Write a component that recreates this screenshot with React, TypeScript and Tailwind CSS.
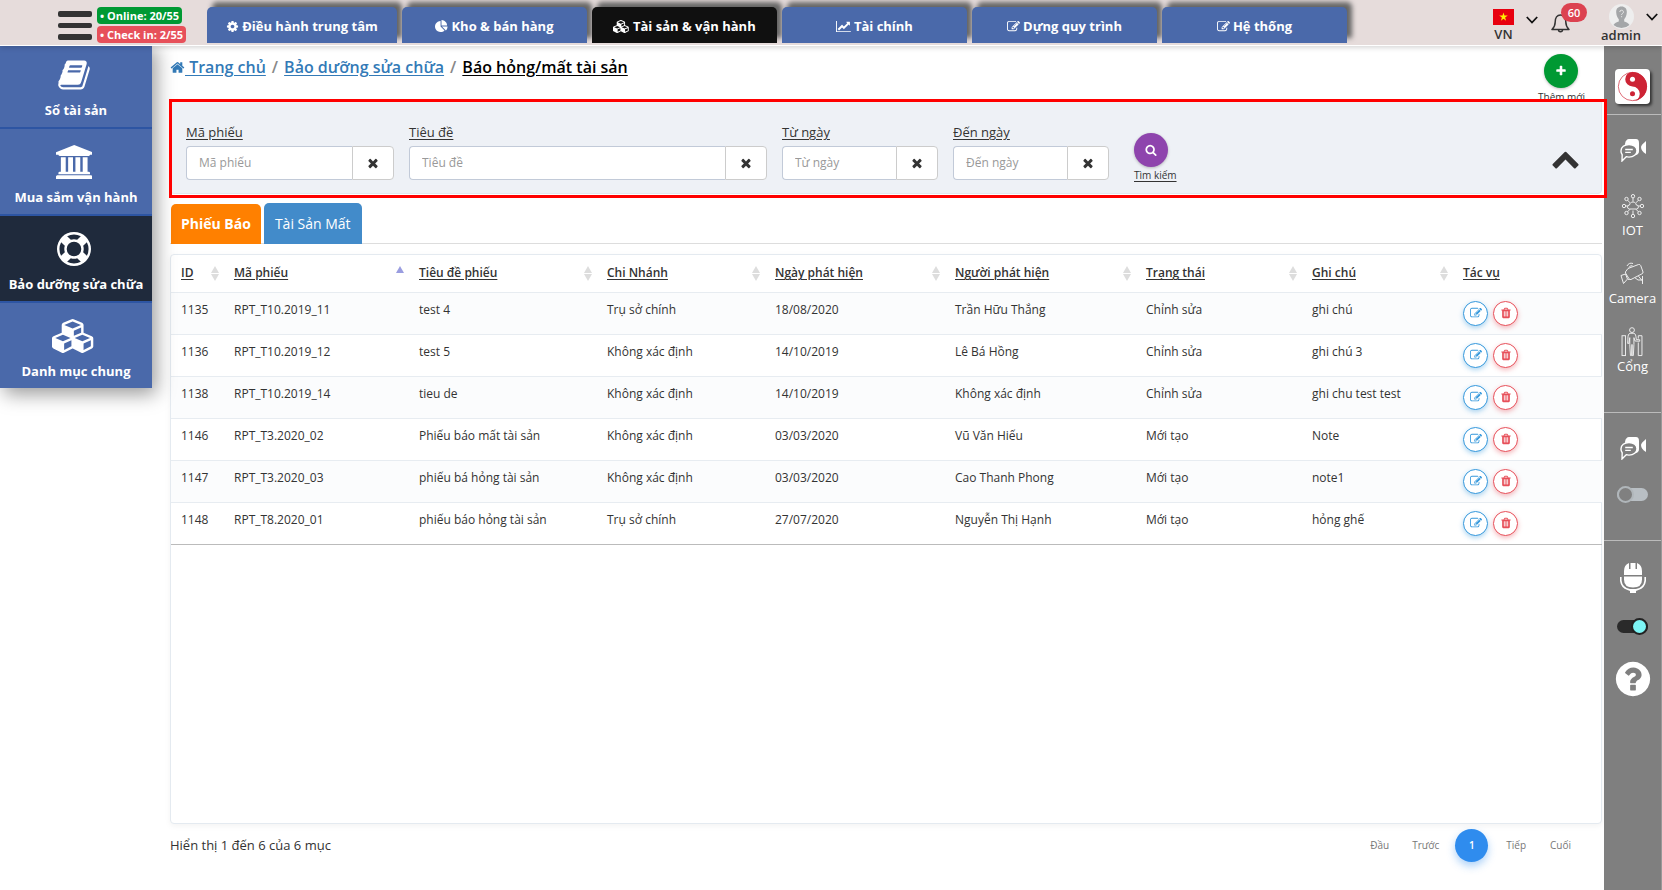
import { useState } from "react";
import type { ReactNode } from "react";

type IconShape = { w: number; d: string };

const icons: Record<string, IconShape> = {
  times: { w: 1792, d: "M1490 1322q0 40-28 68l-136 136q-28 28-68 28t-68-28l-294-294-294 294q-28 28-68 28t-68-28l-136-136q-28-28-28-68t28-68l294-294-294-294q-28-28-28-68t28-68l136-136q28-28 68-28t68 28l294 294 294-294q28-28 68-28t68 28l136 136q28 28 28 68t-28 68l-294 294 294 294q28 28 28 68z" },
  up: { w: 1792, d: "M1683 1331l-166 165q-19 19-45 19t-45-19l-531-531-531 531q-19 19-45 19t-45-19l-166-165q-19-19-19-45.5t19-45.5l742-741q19-19 45-19t45 19l742 741q19 19 19 45.5t-19 45.5z" },
  search: { w: 1792, d: "M1216 832q0-185-131.5-316.5t-316.5-131.5-316.5 131.5-131.5 316.5 131.5 316.5 316.5 131.5 316.5-131.5 131.5-316.5zm512 832q0 52-38 90t-90 38q-54 0-90-38l-343-342q-179 124-399 124-143 0-273.5-55.5t-225-150-150-225-55.5-273.5 55.5-273.5 150-225 225-150 273.5-55.5 273.5 55.5 225 150 150 225 55.5 273.5q0 220-124 399l343 343q37 37 37 90z" },
  edit: { w: 1792, d: "M888 1184l116-116-152-152-116 116v56h96v96h56zm440-720q-16-16-33 1l-350 350q-17 17-1 33t33-1l350-350q17-17 1-33zm80 594v190q0 119-84.5 203.5t-203.5 84.5h-832q-119 0-203.5-84.5t-84.5-203.5v-832q0-119 84.5-203.5t203.5-84.5h832q63 0 117 25 15 7 18 23 3 17-9 29l-49 49q-14 14-32 8-23-6-45-6h-832q-66 0-113 47t-47 113v832q0 66 47 113t113 47h832q66 0 113-47t47-113v-126q0-13 9-22l64-64q15-15 35-7t20 29zm-96-738l288 288-672 672h-288v-288zm444 132l-92 92-288-288 92-92q28-28 68-28t68 28l152 152q28 28 28 68t-28 68z" },
  trash: { w: 1792, d: "M704 1376v-704q0-14-9-23t-23-9h-64q-14 0-23 9t-9 23v704q0 14 9 23t23 9h64q14 0 23-9t9-23zm256 0v-704q0-14-9-23t-23-9h-64q-14 0-23 9t-9 23v704q0 14 9 23t23 9h64q14 0 23-9t9-23zm256 0v-704q0-14-9-23t-23-9h-64q-14 0-23 9t-9 23v704q0 14 9 23t23 9h64q14 0 23-9t9-23zm-544-992h448l-48-117q-7-9-17-11h-317q-10 2-17 11zm928 32v64q0 14-9 23t-23 9h-96v948q0 83-47 143.5t-113 60.5h-832q-66 0-113-58.5t-47-141.5v-952h-96q-14 0-23-9t-9-23v-64q0-14 9-23t23-9h309l70-167q15-37 54-63t79-26h320q40 0 79 26t54 63l70 167h309q14 0 23 9t9 23z" },
  cog: { w: 1792, d: "M1152 896q0-106-75-181t-181-75-181 75-75 181 75 181 181 75 181-75 75-181zm512-109v222q0 12-8 23t-20 13l-185 28q-19 54-39 91 35 50 107 138 10 12 10 25t-9 23q-27 37-99 108t-94 71q-12 0-26-9l-138-108q-44 23-91 38-16 136-29 186-7 28-36 28h-222q-14 0-24.5-8.5t-11.5-21.5l-28-184q-49-16-90-37l-141 107q-10 9-25 9-14 0-25-11-126-114-165-168-7-10-7-23 0-12 8-23 15-21 51-66.5t54-70.5q-27-50-41-99l-183-27q-13-2-21-12.5t-8-23.5v-222q0-12 8-23t19-13l186-28q14-46 39-92-40-57-107-138-10-12-10-24 0-10 9-23 26-36 98.5-107.5t94.5-71.5q13 0 26 10l138 107q44-23 91-38 16-136 29-186 7-28 36-28h222q14 0 24.5 8.5t11.5 21.5l28 184q49 16 90 37l142-107q9-9 24-9 13 0 25 10 129 119 165 170 7 8 7 22 0 12-8 23-15 21-51 66.5t-54 70.5q26 50 41 98l183 28q13 2 21 12.5t8 23.5z" },
  plus: { w: 1792, d: "M1600 736v192q0 40-28 68t-68 28h-416v416q0 40-28 68t-68 28h-192q-40 0-68-28t-28-68v-416h-416q-40 0-68-28t-28-68v-192q0-40 28-68t68-28h416v-416q0-40 28-68t68-28h192q40 0 68 28t28 68v416h416q40 0 68 28t28 68z" },
  home: { w: 1792, d: "M1472 992v480q0 26-19 45t-45 19h-384v-384h-256v384h-384q-26 0-45-19t-19-45v-480q0-1 .5-3t.5-3l575-474 575 474q1 2 1 6zm223-69l-62 74q-8 9-21 11h-3q-13 0-21-7l-692-577-692 577q-12 8-24 7-13-2-21-11l-62-74q-8-10-7-23.5t11-21.5l719-599q32-26 76-26t76 26l244 204v-195q0-14 9-23t23-9h192q14 0 23 9t9 23v408l219 182q10 8 11 21.5t-7 23.5z" },
  question: { w: 1792, d: "M1024 1376v-192q0-14-9-23t-23-9h-192q-14 0-23 9t-9 23v192q0 14 9 23t23 9h192q14 0 23-9t9-23zm256-672q0-88-55.5-163t-138.5-116-170-41q-243 0-371 213-15 24 8 42l132 100q7 6 19 6 16 0 25-12 53-68 86-92 34-24 86-24 48 0 85.5 26t37.5 59q0 38-20 61t-68 45q-63 28-115.5 86.5t-52.5 125.5v36q0 14 9 23t23 9h192q14 0 23-9t9-23q0-19 21.5-49.5t54.5-49.5q32-18 49-28.5t46-35 44.5-48 28-60.5 12.5-81zm384 192q0 209-103 385.5t-279.5 279.5-385.5 103-385.5-103-279.5-279.5-103-385.5 103-385.5 279.5-279.5 385.5-103 385.5 103 279.5 279.5 103 385.5z" },
  line: { w: 2048, d: "M2048 1536v128h-2048v-1536h128v1408h1920zm-128-1248v435q0 21-19.5 29.5t-35.5-7.5l-121-121-633 633q-10 10-23 10t-23-10l-233-233-416 416-192-192 585-585q10-10 23-10t23 10l233 233 464-464-121-121q-16-16-7.5-35.5t29.5-19.5h435q14 0 23 9t9 23z" },
  pie: { w: 1792, d: "M768 890l546 546q-106 108-247.5 168t-298.5 60q-209 0-385.5-103t-279.5-279.5-103-385.5 103-385.5 279.5-279.5 385.5-103v762zm187 6h773q0 157-60 298.5t-168 247.5zm709-128h-768v-768q209 0 385.5 103t279.5 279.5 103 385.5z" },
  cubes: { w: 2304, d: "M640 1632l384-192v-314l-384 164v342zm-64-454l404-173-404-173-404 173zm1088 454l384-192v-314l-384 164v342zm-64-454l404-173-404-173-404 173zm-448-293l384-165v-266l-384 164v267zm-64-379l441-189-441-189-441 189zm1088 518v416q0 36-19 67t-52 47l-448 224q-25 14-57 14t-57-14l-448-224q-4-2-7-4-2 2-7 4l-448 224q-25 14-57 14t-57-14l-448-224q-33-16-52-47t-19-67v-416q0-38 21.5-70t56.5-48l434-186v-400q0-38 21.5-70t56.5-48l448-192q23-10 50-10t50 10l448 192q35 16 56.5 48t21.5 70v400l434 186q36 16 57 48t21 70z" },
  bank: { w: 1920, d: "M960 0l960 384v128h-128q0 26-20.5 45t-48.5 19h-1526q-28 0-48.5-19t-20.5-45h-128v-128zm-704 640h256v768h128v-768h256v768h128v-768h256v768h128v-768h256v768h59q28 0 48.5 19t20.5 45v64h-1664v-64q0-26 20.5-45t48.5-19h59v-768zm1595 960q28 0 48.5 19t20.5 45v128h-1920v-128q0-26 20.5-45t48.5-19h1782z" },
  ring: { w: 1792, d: "M896 0q182 0 348 71t286 191 191 286 71 348-71 348-191 286-286 191-348 71-348-71-286-191-191-286-71-348 71-348 191-286 286-191 348-71zm0 128q-190 0-361 90l194 194q82-28 167-28t167 28l194-194q-171-90-361-90zm-678 1129l194-194q-28-82-28-167t28-167l-194-194q-90 171-90 361t90 361zm678 407q190 0 361-90l-194-194q-82 28-167 28t-167-28l-194 194q171 90 361 90zm0-384q159 0 271.5-112.5t112.5-271.5-112.5-271.5-271.5-112.5-271.5 112.5-112.5 271.5 112.5 271.5 271.5 112.5zm484-217l194 194q90-171 90-361t-90-361l-194 194q28 82 28 167t-28 167z" },
  book: { w: 1792, d: "M1703 478q40 57 18 129l-275 906q-19 64-76.5 107.5t-122.5 43.5h-923q-77 0-148.5-53.5t-99.5-131.5q-24-67-2-127 0-4 3-27t4-37q1-8-3-21.5t-3-19.5q2-11 8-21t16.5-23.5 16.5-23.5q23-38 45-91.5t30-91.5q3-10 .5-30t-.5-28q3-11 17-28t17-23q21-36 42-92t25-90q1-9-2.5-32t.5-28q4-13 22-30.5t22-22.5q19-26 42.5-84.5t27.5-96.5q1-8-3-25.5t-2-26.5q2-8 9-18t18-23 17-21q8-12 16.5-30.5t15-35 16-36 19.5-32 26.5-23.5 36-11.5 47.5 5.5l-1 3q38-9 51-9h761q74 0 114 56t18 130l-274 906q-36 119-71.5 153.5t-128.5 34.5h-869q-27 0-38 15-11 16-1 43 24 70 144 70h923q29 0 56-15.5t35-41.5l300-987q7-22 5-57 38 15 59 43zm-1064 2q-4 13 2 22.5t20 9.5h608q13 0 25.5-9.5t16.5-22.5l21-64q4-13-2-22.5t-20-9.5h-608q-13 0-25.5 9.5t-16.5 22.5zm-83 256q-4 13 2 22.5t20 9.5h608q13 0 25.5-9.5t16.5-22.5l21-64q4-13-2-22.5t-20-9.5h-608q-13 0-25.5 9.5t-16.5 22.5z" },
};

function Icon({ name, className }: { name: string; className: string }) {
  const shape = icons[name];
  return (
    <svg viewBox={`0 0 ${shape.w} 1792`} className={`w-auto shrink-0 fill-current ${className}`} aria-hidden="true">
      <path d={shape.d} />
    </svg>
  );
}

const topTabs = [
  { icon: "cog", label: "Điều hành trung tâm", width: "w-[190px]" },
  { icon: "pie", label: "Kho & bán hàng", width: "w-[185px]" },
  { icon: "cubes", label: "Tài sản & vận hành", width: "w-[185px]", active: true },
  { icon: "line", label: "Tài chính", width: "w-[185px]" },
  { icon: "edit", label: "Dựng quy trình", width: "w-[185px]" },
  { icon: "edit", label: "Hệ thống", width: "w-[185px]" },
];

function Header() {
  return (
    <header className="relative z-10 flex h-[45px] items-start bg-[#e6dcdb] shadow-[0_1px_0_#fff,0_2px_6px_rgba(0,0,0,0.2)]">
      <div className="flex w-[207px] shrink-0 items-start gap-[5px] pl-[58px] pt-[7px]">
        <button type="button" aria-label="Menu" className="flex flex-col gap-[6px] pt-1">
          <span className="h-[6px] w-[34px] rounded-[2px] bg-[#333]" />
          <span className="h-[5px] w-[34px] rounded-[2px] bg-[#333]" />
          <span className="h-[6px] w-[34px] rounded-[2px] bg-[#333]" />
        </button>
        <div className="flex flex-col items-start gap-[2px] text-[11px] leading-[17px] font-bold whitespace-nowrap text-white">
          <span className="rounded bg-[#093] px-[3px]">• Online: 20/55</span>
          <span className="rounded bg-[#e7505a] px-[3px]">• Check in: 2/55</span>
        </div>
      </div>
      <nav className="flex gap-[5px] pt-[7px]">
        {topTabs.map((t) => (
          <a
            key={t.label}
            href="#"
            className={`flex h-9 items-center justify-center gap-[3px] rounded-t-[5px] pt-[2px] text-[13px] leading-[18px] font-bold whitespace-nowrap text-white shadow-[5px_-5px_5px_#666] ${t.width} ${t.active ? "bg-[#101010]" : "bg-[#4a69aa]"}`}
          >
            <Icon name={t.icon} className="h-[13px]" />
            {t.label}
          </a>
        ))}
      </nav>
      <div className="ml-auto flex text-[#333]">
        <button type="button" className="flex w-11 gap-3 pt-[9px]">
          <span className="flex flex-col items-center">
            <svg viewBox="0 0 21 16" className="h-4 w-[21px]" aria-hidden="true">
              <rect width="21" height="16" fill="#e8000f" />
              <path d="M10.500 3.500l1 3.100h3.300l-2.700 1.900 1 3.200-2.600-2-2.600 2 1-3.200-2.700-1.900h3.300z" fill="#ffee00" />
            </svg>
            <span className="text-[13px] leading-[18px] font-semibold">VN</span>
          </span>
          <Caret className="mt-[7px]" />
        </button>
        <button type="button" aria-label="Thông báo" className="relative ml-[14px] flex w-[34px] pt-[13px]">
          <svg viewBox="0 0 19 20" className="h-5 w-[19px]" fill="none" stroke="#333" strokeWidth="1.5" aria-hidden="true">
            <path d="M1 16.5h17c-2.600-2.500-3.200-4-3.200-7.500 0-4-1.800-7-5.300-7s-5.300 3-5.300 7c0 3.500-.6 5-3.200 7.500z" strokeLinejoin="round" />
            <path d="M7.500 16.800a2 2 0 0 0 4 0" />
          </svg>
          <span className="absolute top-[3px] left-[10px] h-[19px] w-[26px] rounded-full bg-[#dc4250] text-center text-[11px] leading-[19px] font-semibold text-white">60</span>
        </button>
        <button type="button" className="ml-4 flex gap-[5px] pt-1 pr-1">
          <span className="flex w-10 flex-col items-center">
            <svg viewBox="0 0 25 25" className="size-[25px]" aria-hidden="true">
              <circle cx="12.500" cy="12.500" r="12.500" fill="#eeeeee" />
              <path d="M12.500 2.500c3.800 0 5.500 2.500 5.300 6-.2 3-1.300 5.500-2.600 6.800v2.200c2 .8 4.300 1.500 5.300 3.500a12 12 0 0 1-16 0c1-2 3.300-2.700 5.300-3.500v-2.200c-1.300-1.300-2.400-3.800-2.600-6.800-.2-3.500 1.500-6 5.300-6z" fill="#a4a6a8" />
              <path d="M10.800 8a1.800 1.800 0 1 1 2.600 1.600c-.6.3-.8.6-.8 1.300M12.600 12.200v1" stroke="#e8e8e8" fill="none" strokeWidth="1" />
            </svg>
            <span className="text-[13px] leading-[12px] font-semibold">admin</span>
          </span>
          <Caret className="mt-[9px]" />
        </button>
      </div>
    </header>
  );
}

function Caret({ className }: { className: string }) {
  return (
    <svg viewBox="0 0 12 8" className={`h-2 w-3 shrink-0 ${className}`} fill="none" stroke="#111" strokeWidth="1.8" aria-hidden="true">
      <path d="M.8 1L6 6.500 11.200 1" />
    </svg>
  );
}

const sideItems = [
  { icon: "book", label: "Sổ tài sản" },
  { icon: "bank", label: "Mua sắm vận hành" },
  { icon: "ring", label: "Bảo dưỡng sửa chữa", active: true },
  { icon: "cubes", label: "Danh mục chung" },
];

function Sidebar() {
  return (
    <aside className="relative w-[152px] shrink-0">
      <nav className="-mt-[3px] shadow-[4px_6px_18px_rgba(0,0,0,0.4)]">
        {sideItems.map((s) => (
          <a
            key={s.label}
            href="#"
            className={`flex h-[87px] flex-col items-center border-b-2 pt-4 text-[13px] leading-[18px] font-bold text-white last:h-[85px] last:border-b-0 ${s.active ? "border-[#2d55a3] bg-[#1f2a3c]" : "border-[#2d55a3] bg-[#4a69aa]"}`}
          >
            <span className="flex justify-center pr-1">
              <Icon name={s.icon} className="h-[34px]" />
            </span>
            <span className="mt-[9px] whitespace-nowrap">{s.label}</span>
          </a>
        ))}
      </nav>
    </aside>
  );
}

function Field({ id, label }: { id: string; label: string }) {
  return (
    <div className="min-w-0">
      <label htmlFor={id} className="block text-[13px] leading-5 underline underline-offset-2">
        {label}
      </label>
      <div className="mt-1 flex h-[34px]">
        <input
          id={id}
          placeholder={label}
          className="w-full min-w-0 flex-1 rounded-l border border-r-0 border-[#c2cad8] bg-white px-3 text-xs outline-none placeholder:text-[#999]"
        />
        <button type="button" aria-label={`Xóa ${label}`} className="flex w-[42px] items-center justify-center rounded-r border border-[#ccc] bg-white text-[#333]">
          <Icon name="times" className="h-[14px]" />
        </button>
      </div>
    </div>
  );
}

function Filter() {
  return (
    <section className="relative z-20 grid h-[95px] grid-cols-[208px_358px_156px_156px_1fr] gap-[15px] rounded border border-[#e0e8ef] bg-[#eef1f6] pt-[22px] pl-[15px]">
      <Field id="code" label="Mã phiếu" />
      <Field id="title" label="Tiêu đề" />
      <Field id="from" label="Từ ngày" />
      <Field id="to" label="Đến ngày" />
      <div className="flex items-start justify-between pt-[11px] pr-[21px] pl-[10px]">
        <button type="button" className="flex flex-col items-start text-[10px] leading-4 underline underline-offset-2">
          <span className="flex size-[34px] items-center justify-center rounded-full bg-[#8e44ad] text-white shadow-[0_1px_3px_rgba(0,0,0,0.25)]">
            <Icon name="search" className="h-3" />
          </span>
          Tìm kiếm
        </button>
        <button type="button" aria-label="Thu gọn" className="mt-[11px] text-[#333]">
          <Icon name="up" className="h-[29px]" />
        </button>
      </div>
      <div className="pointer-events-none absolute -top-[1px] -right-[6px] -bottom-[5px] -left-[2px] border-[3px] border-[#f00]" />
    </section>
  );
}

const columns = [
  { label: "ID", width: "w-[53px]" },
  { label: "Mã phiếu", width: "w-[185px]", sorted: true },
  { label: "Tiêu đề phiếu", width: "w-[188px]" },
  { label: "Chi Nhánh", width: "w-[168px]" },
  { label: "Ngày phát hiện", width: "w-[180px]" },
  { label: "Người phát hiện", width: "w-[191px]" },
  { label: "Trạng thái", width: "w-[166px]" },
  { label: "Ghi chú", width: "w-[151px]" },
  { label: "Tác vụ", width: "w-[149px]", last: true },
];

const rows = [
  ["1135", "RPT_T10.2019_11", "test 4", "Trụ sở chính", "18/08/2020", "Trần Hữu Thắng", "Chỉnh sửa", "ghi chú"],
  ["1136", "RPT_T10.2019_12", "test 5", "Không xác định", "14/10/2019", "Lê Bá Hồng", "Chỉnh sửa", "ghi chú 3"],
  ["1138", "RPT_T10.2019_14", "tieu de", "Không xác định", "14/10/2019", "Không xác định", "Chỉnh sửa", "ghi chu test test"],
  ["1146", "RPT_T3.2020_02", "Phiếu báo mất tài sản", "Không xác định", "03/03/2020", "Vũ Văn Hiếu", "Mới tạo", "Note"],
  ["1147", "RPT_T3.2020_03", "phiếu bá hỏng tài sản", "Không xác định", "03/03/2020", "Cao Thanh Phong", "Mới tạo", "note1"],
  ["1148", "RPT_T8.2020_01", "phiếu báo hỏng tài sản", "Trụ sở chính", "27/07/2020", "Nguyễn Thị Hạnh", "Mới tạo", "hỏng ghế"],
];

function SortMark({ sorted }: { sorted?: boolean }) {
  return (
    <svg viewBox="0 0 8 15" className="mr-[5px] h-[15px] w-2 shrink-0" aria-hidden="true">
      <path d="M4 0l4 7H0z" fill={sorted ? "#9a9de0" : "#ddd"} />
      {!sorted && <path d="M4 15l4-7H0z" fill="#ddd" />}
    </svg>
  );
}

function DataTable() {
  return (
    <div className="mt-[10px] flex-1 rounded border border-[#e4eaf0] bg-white shadow-[0_2px_6px_rgba(0,0,0,0.05)]">
      <table className="w-full table-fixed border-collapse border-b border-[#bbb] text-left text-xs text-[#333]">
        <thead>
          <tr className="h-[37px] border-b border-[#e7ecf1]">
            {columns.map((c) => (
              <th key={c.label} className={`p-0 pl-[10px] font-semibold ${c.width}`}>
                <button type="button" className="flex w-full items-center justify-between">
                  <span className="whitespace-nowrap underline underline-offset-2">{c.label}</span>
                  {!c.last && <SortMark sorted={c.sorted} />}
                </button>
              </th>
            ))}
          </tr>
        </thead>
        <tbody>
          {rows.map((r) => (
            <tr key={r[0]} className="h-[42px] border-t border-[#e7ecf1] align-top odd:bg-[#fbfcfd]">
              {r.map((cell, i) => (
                <td key={i} className="p-0 pt-2 pl-[10px] leading-[18px] whitespace-nowrap">
                  {cell}
                </td>
              ))}
              <td className="p-0 pt-2 pl-[10px]">
                <div className="flex gap-[5px]">
                  <button type="button" aria-label="Sửa" className="flex size-[25px] items-center justify-center rounded-full border border-[#3598dc] bg-white text-[#3598dc] shadow-[0_2px_5px_rgba(53,152,220,0.4)]">
                    <Icon name="edit" className="h-3" />
                  </button>
                  <button type="button" aria-label="Xóa" className="flex size-[25px] items-center justify-center rounded-full border border-[#e7505a] bg-white text-[#e7505a] shadow-[0_2px_5px_rgba(231,80,90,0.4)]">
                    <Icon name="trash" className="h-3" />
                  </button>
                </div>
              </td>
            </tr>
          ))}
        </tbody>
      </table>
    </div>
  );
}

function ChatVideo() {
  return (
    <svg viewBox="0 0 26 23" className="h-[23px] w-[26px]" aria-hidden="true">
      <path d="M5 4.500Q6 0 9 0h7q3 0 3 4v8q0 3-3 4H7z" fill="#fff" />
      <path d="M21 8q0-2 5-6v13q-5-3-5-7z" fill="#fff" />
      <path d="M9 5.500c4.600 0 8 2.700 8 6.300s-3.400 6.300-8 6.300c-1 0-2-.1-2.800-.4L2 22l.2-6.200A5.700 5.700 0 0 1 1 11.800C1 8.200 4.400 5.500 9 5.500z" fill="#7f7f7f" stroke="#fff" strokeWidth="1.400" />
      <path d="M5.200 10.500h7.600M5.200 13.400h5.600" stroke="#fff" strokeWidth="1.300" />
    </svg>
  );
}

function IotIcon() {
  const nodes = [[11, 2.200], [17.500, 5], [20, 12], [17.500, 19], [11, 22], [4.500, 19], [2, 12], [4.500, 5]];
  return (
    <svg viewBox="0 0 22 24" className="h-6 w-[22px] overflow-visible" fill="none" stroke="#eee" strokeWidth="1" aria-hidden="true">
      {nodes.map(([x, y]) => (
        <g key={`${x}-${y}`}>
          <path d={`M${11 + (x - 11) * 0.45} ${12 + (y - 12) * 0.45}L${11 + (x - 11) * 0.82} ${12 + (y - 12) * 0.82}`} />
          <circle cx={x} cy={y} r="1.700" />
        </g>
      ))}
      <path d="M7.500 15a2 2 0 0 1 0-4c.3-2 1.700-3 3.500-3s3 1.200 3.300 3a2 2 0 0 1 .2 4z" fill="#7f7f7f" />
    </svg>
  );
}

function CameraIcon() {
  return (
    <svg viewBox="0 0 24 23" className="h-[23px] w-6" fill="none" stroke="#eee" strokeWidth="1" aria-hidden="true">
      <path d="M8 6.500L18.500 2.500q1.500-.4 2.200 1L23 10q.3 1.200-1 1.800L11 17.500q-1.300.4-2-.8L5.500 11q-.4-1.200.6-2z" />
      <path d="M5.500 12L7.500 17 3.500 21.500 1 13.500zM8 17.300l1.600.2M15 15.800l3 2.200h4M22.500 14v8M22 18.500l-3.500-4.300" />
      <path d="M7 4a5 5 0 0 1 6-2.500M9 5.500a3 3 0 0 1 3.500-1.700" />
    </svg>
  );
}

function GateIcon() {
  return (
    <svg viewBox="0 0 22 31" className="h-[30px] w-[22px]" fill="none" stroke="#eee" strokeWidth="1" aria-hidden="true">
      <rect x=".7" y="9" width="3.600" height="20.500" />
      <path d="M17.500 12V9h3.800v20.500h-3.800V16" />
      <circle cx="11" cy="3.200" r="2.500" />
      <path d="M9 6.500h4q1.800.5 2 3l.5 3.500 3.500.2v1.500l-4.800-.2-1.200-3.500v7l-.6 11.500h-1.200L11 18l-.4 11.500H9.400L8.700 18v-7l-1 6H6.500l.4-7.500q.2-2.500 2.100-3z" />
    </svg>
  );
}

function Toggle({ label, initial }: { label: string; initial: boolean }) {
  const [on, setOn] = useState(initial);
  return (
    <input
      type="checkbox"
      role="switch"
      aria-label={label}
      checked={on}
      onChange={() => setOn(!on)}
      className="flex h-[13px] w-[31px] appearance-none items-center rounded-full bg-[#b9bfc4] before:block before:size-[17px] before:shrink-0 before:rounded-full before:border-2 before:border-[#b0b6ba] before:bg-[#808080] before:content-[''] checked:justify-end checked:bg-[#2a2a2a] checked:before:border-[#222] checked:before:bg-[#7cf5f5]"
    />
  );
}

function ToolButton({ label, children, className }: { label: string; children: ReactNode; className: string }) {
  return (
    <button type="button" className={`flex flex-col items-center text-[13px] leading-[18px] text-white ${className}`}>
      {children}
      {label}
    </button>
  );
}

function ToolBar() {
  return (
    <aside className="flex w-[58px] shrink-0 flex-col border-r border-[#999] bg-[#7f7f7f]">
      <div className="flex h-[70px] justify-center border-b border-[#bbb] pt-6">
        <button type="button" aria-label="Trang chính" className="size-[35px] rounded bg-white p-[2px] shadow-[2px_2px_3px_rgba(0,0,0,0.6)]">
          <svg viewBox="0 0 32 32" className="size-full" aria-hidden="true">
            <circle cx="16" cy="16" r="14.600" fill="#fff" stroke="#cd2435" strokeWidth=".7" />
            <g fill="#cd2435">
              <path d="M16 1a15 15 0 0 1 0 30A7.500 7.500 0 0 0 16 16 7.500 7.500 0 0 1 16 1z" />
              <circle cx="16" cy="23.500" r="2.600" />
            </g>
            <circle cx="16" cy="8.500" r="2.600" fill="#fff" />
          </svg>
        </button>
      </div>
      <div className="flex h-[298px] flex-col items-center border-b border-[#bbb] pt-6">
        <button type="button" aria-label="Họp trực tuyến">
          <ChatVideo />
        </button>
        <ToolButton label="IOT" className="mt-8 gap-[3px]">
          <IotIcon />
        </ToolButton>
        <ToolButton label="Camera" className="mt-[23px] gap-1">
          <CameraIcon />
        </ToolButton>
        <ToolButton label="Cổng" className="mt-5">
          <GateIcon />
        </ToolButton>
      </div>
      <div className="flex h-32 flex-col items-center border-b border-[#bbb] pt-6">
        <button type="button" aria-label="Trò chuyện">
          <ChatVideo />
        </button>
        <div className="mt-[28px]">
          <Toggle label="Trò chuyện video" initial={false} />
        </div>
      </div>
      <div className="flex flex-col items-center pt-[22px]">
        <button type="button" aria-label="Micro">
          <svg viewBox="0 0 26 30" className="h-[30px] w-[26px]" fill="#fff" aria-hidden="true">
            <path d="M4 12V8q0-6 5-8v6h1.500V0h5v6H17V0q5 2 5 8v4z" />
            <path d="M4 13.500h18v3q0 8-9 8t-9-8z" />
            <path d="M0 14h1.600v3.500q.8 7 8.400 8.600h6q7.600-1.600 8.400-8.600V14H26v4q-1 7-7.500 9L16 28v2h-6v-2l-2.500-1Q1 25 0 18z" />
          </svg>
        </button>
        <div className="mt-[27px]">
          <Toggle label="Giọng nói" initial />
        </div>
        <button type="button" aria-label="Trợ giúp" className="mt-[26px] text-white">
          <Icon name="question" className="h-10" />
        </button>
      </div>
    </aside>
  );
}

export default function App() {
  return (
    <div className="flex min-h-screen flex-col bg-white font-['Open_Sans',sans-serif] text-[#333]">
      <Header />
      <div className="flex flex-1">
        <Sidebar />
        <main className="flex min-w-0 flex-1 flex-col pr-[2px] pl-[18px]">
          <div className="flex h-[54px] items-start justify-between pt-[9px]">
            <nav aria-label="Breadcrumb" className="flex items-center gap-[6px] text-base leading-[26px] font-semibold text-[#337ab7]">
              <a href="#" className="flex items-center">
                <Icon name="home" className="h-[15px]" />
                <span className="whitespace-pre underline underline-offset-2"> Trang chủ</span>
              </a>
              <span className="text-[#888]">/</span>
              <a href="#" className="underline underline-offset-2">Bảo dưỡng sửa chữa</a>
              <span className="text-[#888]">/</span>
              <span className="text-black underline underline-offset-2">Báo hỏng/mất tài sản</span>
            </nav>
            <button type="button" className="mr-[17px] flex flex-col items-center text-[10px] leading-[18px] whitespace-nowrap">
              <span className="flex size-[34px] items-center justify-center rounded-full bg-[#093] text-white shadow-[0_1px_3px_rgba(0,0,0,0.25)]">
                <Icon name="plus" className="h-3" />
              </span>
              Thêm mới
            </button>
          </div>
          <Filter />
          <div className="mt-[9px] flex items-end gap-[3px] border-b border-[#ddd] pl-px text-sm">
            <button type="button" className="-mb-px h-10 rounded-t-[5px] bg-[#ff8000] px-[10px] font-bold text-white">Phiếu Báo</button>
            <button type="button" className="-mb-px h-[41px] rounded-t-[5px] bg-[#428bca] px-[11px] text-white">Tài Sản Mất</button>
          </div>
          <DataTable />
          <footer className="flex h-[66px] items-start justify-between pt-[5px]">
            <p className="text-[13px] leading-8">Hiển thị 1 đến 6 của 6 mục</p>
            <nav aria-label="Phân trang" className="mr-[31px] flex h-[33px] items-center text-[10px] text-[#777]">
              <button type="button">Đầu</button>
              <button type="button" className="ml-[23px]">Trước</button>
              <button type="button" aria-current="page" className="mr-[18px] ml-4 size-[33px] rounded-full bg-[#2f8cee] font-semibold text-white shadow-[0_4px_8px_rgba(47,140,238,0.4)]">1</button>
              <button type="button">Tiếp</button>
              <button type="button" className="ml-6">Cuối</button>
            </nav>
          </footer>
        </main>
        <ToolBar />
      </div>
    </div>
  );
}
